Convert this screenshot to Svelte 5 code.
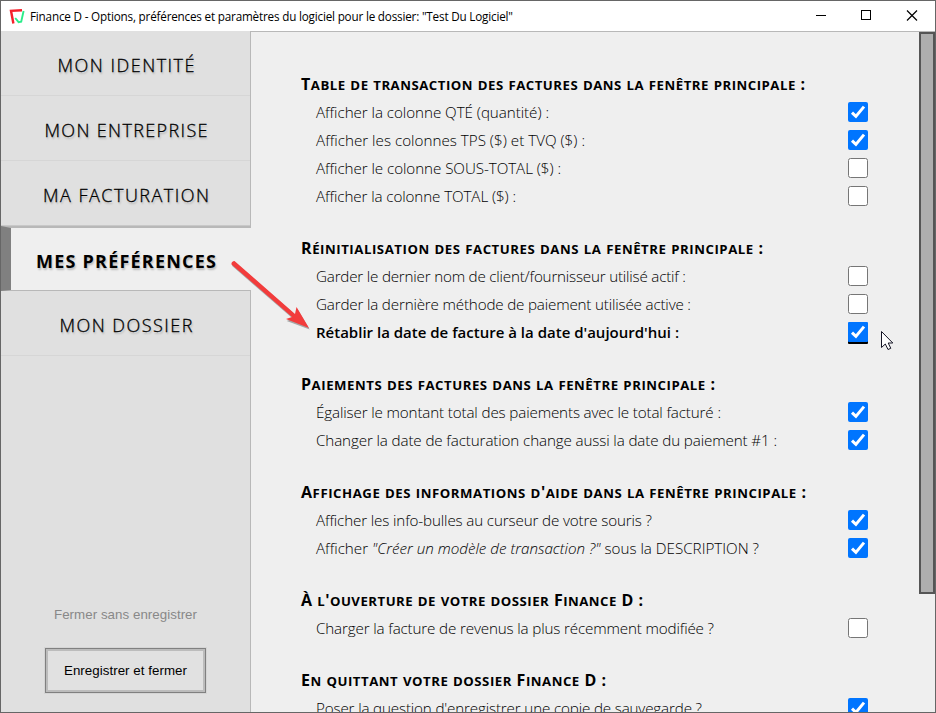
<script>
  const tabs = [
    { label: 'MON IDENTITÉ', w: 137 },
    { label: 'MON ENTREPRISE', w: 163 },
    { label: 'MA FACTURATION', w: 166 },
    { label: 'MES PRÉFÉRENCES', w: 180, active: true },
    { label: 'MON DOSSIER', w: 133 }
  ];

  const groups = [
    { title: 'Table de transaction des factures dans la fenêtre principale :', w: 504, rows: [
      { parts: ['Afficher la colonne QTÉ (quantité) :'], w: 233, on: true },
      { parts: ['Afficher les colonnes TPS ($) et TVQ ($) :'], w: 269, on: true },
      { parts: ['Afficher le colonne SOUS-TOTAL ($) :'], w: 245 },
      { parts: ['Afficher la colonne TOTAL ($) :'], w: 200 }
    ] },
    { title: 'Réinitialisation des factures dans la fenêtre principale :', w: 462, rows: [
      { parts: ['Garder le dernier nom de client/fournisseur utilisé actif :'], w: 370 },
      { parts: ['Garder la dernière méthode de paiement utilisée active :'], w: 375 },
      { parts: ["Rétablir la date de facture à la date d'aujourd'hui :"], w: 363, on: true, current: true }
    ] },
    { title: 'Paiements des factures dans la fenêtre principale :', w: 414, rows: [
      { parts: ['Égaliser le montant total des paiements avec le total facturé :'], w: 405, on: true },
      { parts: ['Changer la date de facturation change aussi la date du paiement #1 :'], w: 461, on: true }
    ] },
    { title: "Affichage des informations d'aide dans la fenêtre principale :", w: 505, rows: [
      { parts: ['Afficher les info-bulles au curseur de votre souris ?'], w: 336, on: true },
      { parts: ['Afficher ', '"Créer un modèle de transaction ?"', ' sous la DESCRIPTION ?'], w: 443, on: true }
    ] },
    { title: "À l'ouverture de votre dossier Finance D :", w: 342, rows: [
      { parts: ['Charger la facture de revenus la plus récemment modifiée ?'], w: 398 }
    ] },
    { title: 'En quittant votre dossier Finance D :', w: 305, rows: [
      { parts: ["Poser la question d'enregistrer une copie de sauvegarde ?"], w: 386, on: true }
    ] }
  ];

  // Runs of lowercase letters are set as small capitals, the rest at full size.
  const runs = (title) => title.match(/[a-zà-ÿ]+|[^a-zà-ÿ]+/g);
  const isLower = (s) => /^[a-zà-ÿ]/.test(s);

  // Spreads the letters so that a label occupies its measured width.
  function fit(node, width) {
    const n = node.textContent.length;
    const natural = node.getBoundingClientRect().width;
    const gap = (width - natural) / (n - 1);
    node.style.letterSpacing = `${gap}px`;
    node.style.marginRight = `${-gap}px`;
  }
</script>

<div class="window">
  <header>
    <svg class="logo" width="16" height="17" viewBox="0 0 16 17">
      <path d="M13 2.2L2 2.8L4.4 15.5" fill="none" stroke="#f5202b" stroke-width="2.4" />
      <path d="M6.2 10L9.6 14.2L12.2 13.6L14.6 3" fill="none" stroke="#2bec8a" stroke-width="1.9" />
    </svg>
    <span class="title"><span use:fit={483}>Finance D - Options, préférences et paramètres du logiciel pour le dossier: "Test Du Logiciel"</span></span>
    <svg class="controls" width="110" height="30" viewBox="0 0 110 30" fill="none" stroke="#000" shape-rendering="crispEdges">
      <path d="M1 14.5H11M46.5 9.5h9v9h-9z" />
      <path d="M92 9.5L102 19.5M102 9.5L92 19.5" shape-rendering="auto" stroke-width="1.2" />
    </svg>
  </header>

  <div class="body">
    <aside>
      <nav>
        {#each tabs as t}
          <div class="tab" class:active={t.active}><span use:fit={t.w}>{t.label}</span></div>
        {/each}
      </nav>
      <div class="actions">
        <div class="cancel"><span use:fit={143}>Fermer sans enregistrer</span></div>
        <button><span use:fit={123}>Enregistrer et fermer</span></button>
      </div>
    </aside>

    <main>
      <div class="content">
        {#each groups as g}
          <section>
            <h2><span use:fit={g.w}>{#each runs(g.title) as s}<span class:small={isLower(s)}>{s}</span>{/each}</span></h2>
            {#each g.rows as r}
              <div class="row" class:current={r.current}>
                <span class="label" use:fit={r.w}>{#each r.parts as p, i}{#if i === 1}<em>{p}</em>{:else}{p}{/if}{/each}</span>
                <span class="box" class:on={r.on}>
                  {#if r.on}
                    <svg width="20" height="20" viewBox="0 0 20 20"><path d="M4 10.7L7.9 14.4L16 4.6" fill="none" stroke="#fff" stroke-width="3" /></svg>
                  {/if}
                </span>
              </div>
            {/each}
          </section>
        {/each}
      </div>
      <div class="scroll"></div>
    </main>
  </div>

  <svg class="arrow" width="84" height="74" viewBox="0 0 84 74">
    <path d="M4.5 1.5L65.5 54.5L66.5 47.5L79 68.5L56 60L62 57.5L1.5 5Q1 2 4.5 1.5Z" fill="#777" transform="translate(.7 1)" opacity=".6" />
    <path d="M4.5 1L65 54L66.5 47L79 68L56 59L62 57L1.5 4.5Q1 1.5 4.5 1Z" fill="#f23c3c" />
  </svg>
  <svg class="cursor" width="13" height="20" viewBox="0 0 13 20">
    <path d="M.5 .5V16.5L4.3 13L7 18.5L9.8 17.3L7.2 12H11.8Z" fill="#fff" stroke="#151525" />
  </svg>
</div>

<style>
  :global(body) { margin: 0; overflow: hidden; }
  .window {
    position: relative;
    box-sizing: border-box;
    width: 936px;
    height: 713px;
    border: 1px solid #666;
    display: flex;
    flex-direction: column;
    background: #efefef;
    color: #000;
    font-family: "Open Sans", "Noto Sans", sans-serif;
    overflow: hidden;
    white-space: nowrap;
  }
  header { display: flex; align-items: center; height: 30px; flex: none; background: #fff; }
  .logo { margin-left: 8px; flex: none; }
  .title { flex: 1; margin-left: 5px; font: 11.7px/30px "Open Sans", sans-serif; }
  .controls { flex: none; margin-right: 10px; }
  .body { flex: 1; min-height: 0; display: flex; }
  aside {
    width: 250px;
    flex: none;
    box-sizing: border-box;
    background: linear-gradient(90deg, #e0e0e0 249px, #b8b8b8 249px);
    display: flex;
    flex-direction: column;
    justify-content: space-between;
  }
  .tab {
    box-sizing: border-box;
    width: 249px;
    height: 65px;
    border-bottom: 1px solid #d6d6d6;
    display: flex;
    align-items: center;
    justify-content: center;
    padding: 4px 0 0 1px;
    font-size: 18px;
    font-weight: 300;
    -webkit-text-stroke: .3px #000;
    text-shadow: 1px 2px 2px rgba(0, 0, 0, .22);
  }
  .tab:nth-child(3) { border-bottom-color: #c8c8c8; }
  .tab.active {
    width: 250px;
    background: #efefef;
    border-top: 2px solid #b8b8b8;
    border-left: 10px solid #808080;
    border-bottom-color: #b8b8b8;
    padding: 3px 10px 0 0;
    font-weight: 700;
    -webkit-text-stroke: 0;
  }
  .actions { display: flex; flex-direction: column; align-items: center; width: 249px; padding-bottom: 19px; }
  .cancel { font: 13.33px/20px "Liberation Sans", sans-serif; color: #888; margin-bottom: 23px; }
  button {
    width: 161px;
    height: 45px;
    padding: 0;
    border: 1px solid #808080;
    box-shadow: inset 0 0 0 2px #bcbcbc, 0 0 0 1px #d5d5d5;
    background: #e1e1e1;
    color: #000;
    font: 13.33px "Liberation Sans", sans-serif;
  }
  main { flex: 1; box-sizing: border-box; border-top: 1px solid #b8b8b8; display: flex; justify-content: space-between; overflow: hidden; }
  .content { width: 617px; padding: 38px 0 0 50px; box-sizing: border-box; }
  section { margin-bottom: 24px; }
  h2 { margin: 0; height: 28px; font-size: 16px; line-height: 28px; font-weight: 700; }
  .small { font-size: 13.2px; text-transform: uppercase; }
  .row { display: flex; justify-content: space-between; align-items: center; height: 28px; padding-left: 15px; font-size: 15.2px; font-weight: 300; }
  .label { white-space: pre; }
  .row.current { font-size: 15px; font-weight: 600; }
  .box { box-sizing: border-box; width: 20px; height: 20px; border: 1px solid #767676; border-radius: 2.5px; background: #fff; }
  .box.on { border: 0; background: #0075ff; border-radius: 2px; }
  .box svg { display: block; }
  .current .box { box-shadow: 0 2px #000; border-radius: 1px; }
  .scroll { box-sizing: border-box; width: 16px; height: 562px; border: 2px solid #555; background: #aeaeae; }
  .arrow { position: absolute; left: 229px; top: 259px; }
  .cursor { position: absolute; left: 880px; top: 330px; }
</style>
